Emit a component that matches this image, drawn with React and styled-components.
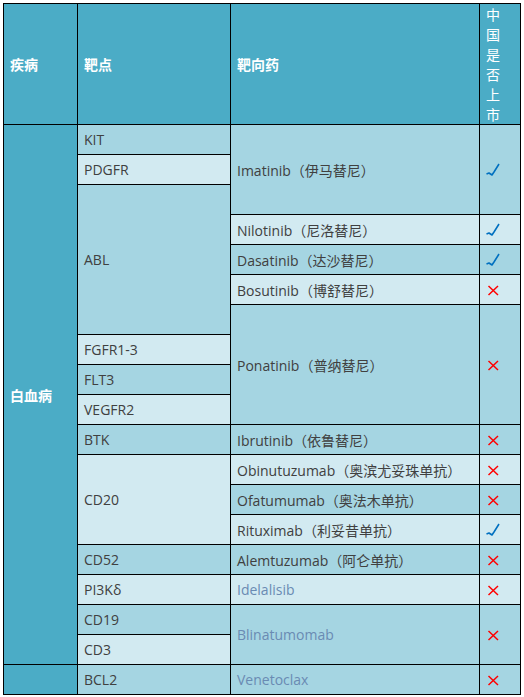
import React from 'react';
import styled, { createGlobalStyle } from 'styled-components';

const GlobalStyle = createGlobalStyle`
  html, body {
    margin: 0;
    padding: 0;
    background: #ffffff;
  }
  body {
    font-family: "Open Sans", "Noto Sans CJK SC", sans-serif;
  }
`;

const Page = styled.div`
  padding: 3px;
`;

const Table = styled.table`
  width: 518px;
  table-layout: fixed;
  border-collapse: collapse;
  border: 1px solid #000;
  font-size: 14px;
  color: #404040;

  td, th {
    border: 1px solid #000;
    padding: 0 6px;
    text-align: left;
    vertical-align: middle;
    overflow: hidden;
  }
`;

const Row = styled.tr`
  height: 30px;
`;

const HeadCell = styled.th`
  height: 120px;
  background: #4bacc6;
  color: #ffffff;
  font-weight: 700;
  font-family: "Noto Sans CJK SC", sans-serif;
`;

const StackHead = styled(HeadCell)`
  && {
    padding: 0 10px 0 6px;
  }
  font-weight: 400;
  line-height: 20px;
  word-break: break-all;
`;

const DiseaseCell = styled.td`
  background: #4bacc6;
  color: #ffffff;
  font-weight: 700;
  font-family: "Noto Sans CJK SC", sans-serif;
`;

const Cell = styled.td`
  height: 29px;
  background: ${(p) => (p.$dark ? '#a5d5e2' : '#d2eaf1')};
  color: ${(p) => (p.$muted ? '#6a8bb3' : '#404040')};
  white-space: nowrap;
`;

const MarkBox = styled.svg`
  display: block;
  width: 14px;
  height: 14px;
`;

const Check = () => (
  <MarkBox viewBox="0 0 14 14">
    <polyline
      points="0.5,11 3,10 6,12 8,9 13,1"
      fill="none"
      stroke="#0070c0"
      strokeWidth="1.6"
      strokeLinejoin="round"
    />
  </MarkBox>
);

const Cross = () => (
  <MarkBox viewBox="0 0 14 14">
    <path d="M2.5 3 L12 12 M12 3 L2.5 12" stroke="#ff0000" strokeWidth="1.5" />
  </MarkBox>
);

const rows = [
  { target: ['KIT', 1], drug: ['Imatinib（伊马替尼）', 3], ok: true },
  { target: ['PDGFR', 1] },
  { target: ['ABL', 5] },
  { drug: ['Nilotinib（尼洛替尼）', 1], ok: true },
  { drug: ['Dasatinib（达沙替尼）', 1], ok: true },
  { drug: ['Bosutinib（博舒替尼）', 1], ok: false },
  { drug: ['Ponatinib（普纳替尼）', 4], ok: false },
  { target: ['FGFR1-3', 1] },
  { target: ['FLT3', 1] },
  { target: ['VEGFR2', 1] },
  { target: ['BTK', 1], drug: ['Ibrutinib（依鲁替尼）', 1], ok: false },
  { target: ['CD20', 3], drug: ['Obinutuzumab（奥滨尤妥珠单抗）', 1], ok: false },
  { drug: ['Ofatumumab（奥法木单抗）', 1], ok: false },
  { drug: ['Rituximab（利妥昔单抗）', 1], ok: true },
  { target: ['CD52', 1], drug: ['Alemtuzumab（阿仑单抗）', 1], ok: false },
  { target: ['PI3Kδ', 1], drug: ['Idelalisib', 1], ok: false, muted: true },
  { target: ['CD19', 1], drug: ['Blinatumomab', 2], ok: false, muted: true },
  { target: ['CD3', 1] },
  { target: ['BCL2', 1], drug: ['Venetoclax', 1], ok: false, muted: true },
];

const App = () => {
  return (
    <Page>
      <GlobalStyle />
      <Table>
        <colgroup>
          <col style={{ width: 74 }} />
          <col style={{ width: 153 }} />
          <col style={{ width: 249 }} />
          <col style={{ width: 41 }} />
        </colgroup>
        <thead>
          <tr>
            <HeadCell>疾病</HeadCell>
            <HeadCell>靶点</HeadCell>
            <HeadCell>靶向药</HeadCell>
            <StackHead>中国是否上市</StackHead>
          </tr>
        </thead>
        <tbody>
          {rows.map((row, i) => {
            const dark = i % 2 === 0;
            return (
              <Row key={i}>
                {i === 0 && <DiseaseCell rowSpan={18}>白血病</DiseaseCell>}
                {i === 18 && <DiseaseCell />}
                {row.target && (
                  <Cell $dark={dark} rowSpan={row.target[1]}>
                    {row.target[0]}
                  </Cell>
                )}
                {row.drug && (
                  <Cell $dark={dark} $muted={row.muted} rowSpan={row.drug[1]}>
                    {row.drug[0]}
                  </Cell>
                )}
                {row.drug && (
                  <Cell $dark={dark} rowSpan={row.drug[1]}>
                    {row.ok ? <Check /> : <Cross />}
                  </Cell>
                )}
              </Row>
            );
          })}
        </tbody>
      </Table>
    </Page>
  );
};

export default App;
